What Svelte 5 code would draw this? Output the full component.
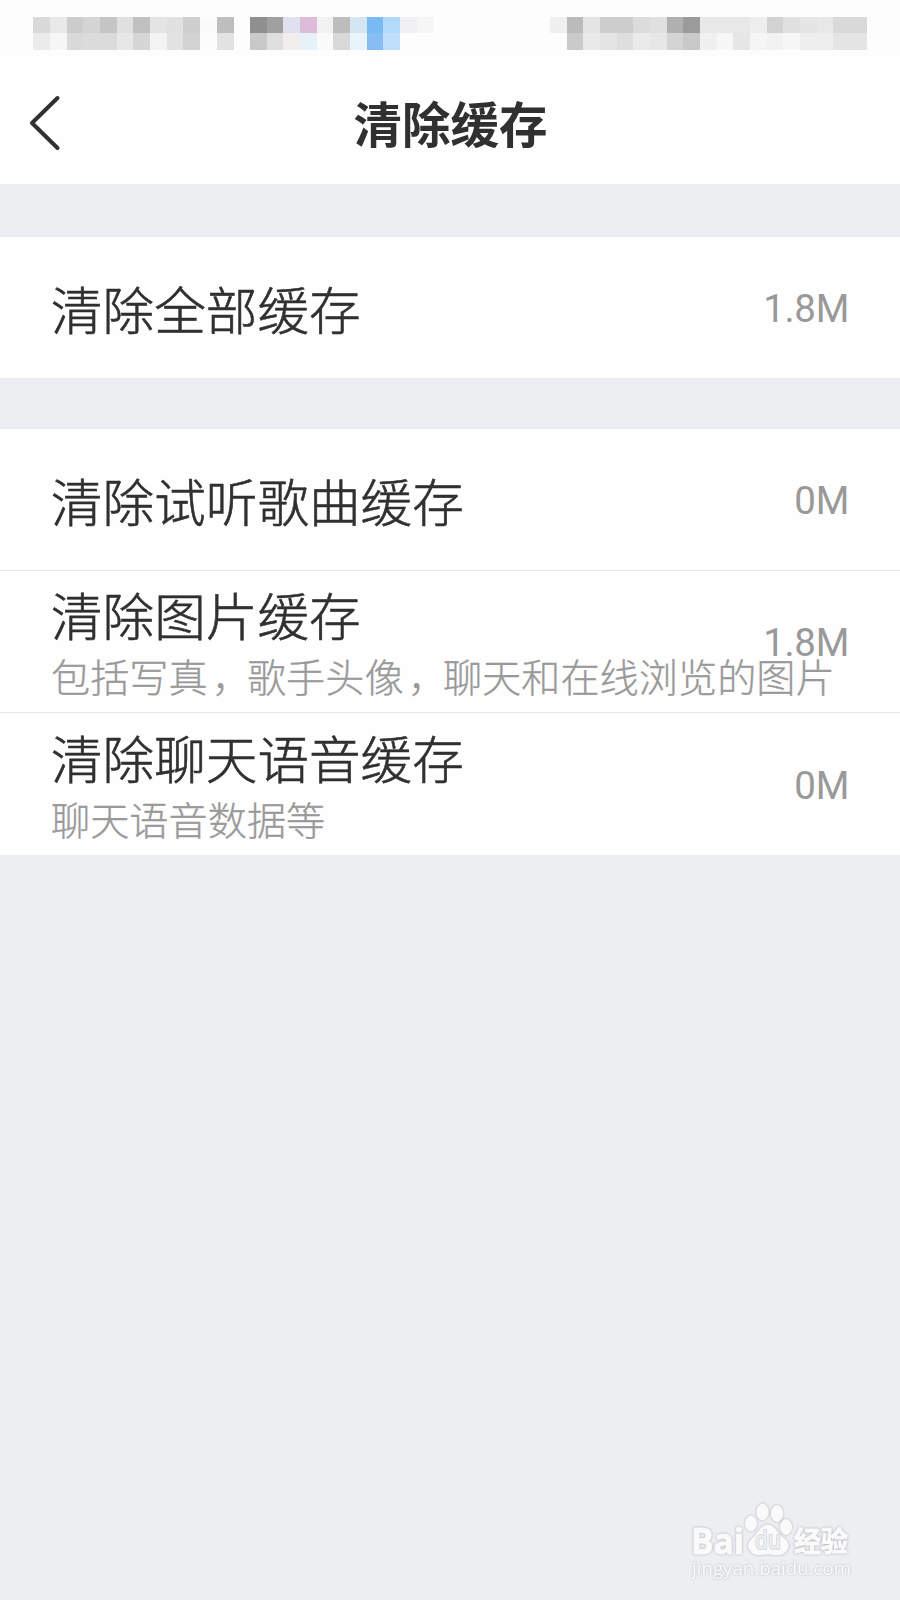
<script>
  // two rows of mosaic tiles, one entry per column, "" leaves the tile empty
  const tiles = [
    "||d9|e9|cc|d4|c5|e0|c0|e4|e1|cf|fa|be||8f|a0|e0e0ee|ddbcd9|f2|bd|d4e6f2|78bbf4|b3daf9|f1f1f3|f6||||||||f0|bb|e4|cd|cd|dc|e0|b0|9b|e8|e8|e8|ee|d2|e1|e5|e8|d9|d9||",
    "||eb|f6|d9|db|db|e7|d6|f3|e2|d3|fc|e2||c9|df|f3eeee|e7f1f8|fa|d9|e8f3fa|86bdf3|bfdffb|||||||||||ca|e9|e4|de|ea|e7|d4|c9|f0|f7|e6|f5|f2|f7|ee|ee|e5|e5||"
  ]
    .map(row => row.split("|"))
    .map(row => row.map(c => (c.length === 2 ? c + c + c : c)));

  const groups = [
    [{ title: "清除全部缓存", size: "1.8M" }],
    [
      { title: "清除试听歌曲缓存", size: "0M" },
      {
        title: "清除图片缓存",
        note: "包括写真，歌手头像，聊天和在线浏览的图片",
        size: "1.8M"
      },
      { title: "清除聊天语音缓存", note: "聊天语音数据等", size: "0M" }
    ]
  ];
</script>

<div class="screen">
  <svg class="status" viewBox="0 0 54 3.36" aria-hidden="true">
    {#each tiles as row, y}
      {#each row as color, x}
        {#if color}
          <rect {x} y={y + 1} width="1.01" height="1" fill={"#" + color} />
        {/if}
      {/each}
    {/each}
  </svg>

  <header>
    <button class="back" aria-label="返回">
      <svg width="36" height="60" viewBox="0 0 36 60">
        <path d="M31.500 5 L6 30 L31.500 55" />
      </svg>
    </button>
    <h1>清除缓存</h1>
  </header>

  <main>
    {#each groups as group}
      <ul>
        {#each group as item}
          <li>
            <div class="label" class:two-line={item.note}>
              <span class="title">{item.title}</span>
              {#if item.note}
                <span class="note">
                  {#each item.note.split(/(，)/) as part}<span class:comma={part === "，"}>{part}</span>{/each}
                </span>
              {/if}
            </div>
            <span class="size">{item.size}</span>
          </li>
        {/each}
      </ul>
    {/each}
  </main>

  <svg class="watermark" width="170" height="90" viewBox="0 0 170 90">
    <g class="mark">
      <text class="latin" x="1" y="53.500" textLength="53" lengthAdjust="spacingAndGlyphs">Bai</text>
      <ellipse cx="61" cy="23.500" rx="5.500" ry="7.500" />
      <ellipse cx="72.500" cy="12" rx="5.700" ry="8" />
      <ellipse cx="87" cy="13.500" rx="5.700" ry="8" />
      <ellipse cx="96" cy="27" rx="5.500" ry="7.500" />
      <path d="M78 25 C71 25 69 32 64 37 C58 42 57 46 60 50 C64 57 71 54 78 54 C85 54 93 57 97 50 C100 45 97 40 92 37 C86 32 85 25 78 25 Z" />
      <text class="cjk" x="104" y="51.500" textLength="54" lengthAdjust="spacingAndGlyphs">经验</text>
    </g>
    <text class="du" x="65" y="49" textLength="26" lengthAdjust="spacingAndGlyphs">du</text>
    <text class="url" x="2" y="75" textLength="159" lengthAdjust="spacingAndGlyphs">jingyan.baidu.com</text>
  </svg>
</div>

<style>
  :global(body) {
    margin: 0;
    background: #eceef2;
  }

  .screen {
    position: relative;
    width: 900px;
    height: 1600px;
    overflow: hidden;
    background: #eceef2;
    font-family: Roboto, "Noto Sans CJK SC", sans-serif;
    color: #303030;
  }

  .status {
    display: block;
    width: 900px;
    height: 56px;
    background: #fdfdfd;
    shape-rendering: crispEdges;
  }

  header {
    display: grid;
    grid-template-columns: 90px 1fr 90px;
    align-items: center;
    box-sizing: border-box;
    height: 128px;
    background: #fefefe;
  }

  .back {
    display: flex;
    padding: 5px 0 0 26px;
    border: 0;
    background: none;
  }

  .back path {
    fill: none;
    stroke: #303030;
    stroke-width: 4;
    stroke-linecap: round;
    stroke-linejoin: round;
  }

  h1 {
    margin: 0;
    padding: 14px 0 0 1px;
    font-size: 48.5px;
    line-height: 64px;
    font-weight: 700;
    text-align: center;
  }

  main {
    display: flex;
    flex-direction: column;
    gap: 47px;
    padding-top: 50.500px;
  }

  ul {
    margin: 0;
    padding: 0;
    list-style: none;
    border-top: 2px solid #ececed;
    border-bottom: 2px solid #ececed;
  }

  li {
    display: flex;
    align-items: center;
    justify-content: space-between;
    box-sizing: border-box;
    height: 141px;
    padding: 0 51px;
    background: #fefefe;
  }

  li + li {
    height: 142.500px;
    border-top: 1.5px solid #e8e8ea;
  }

  .label {
    display: flex;
    flex-direction: column;
    width: 0;
    padding-top: 11px;
    white-space: nowrap;
  }

  .two-line {
    padding-top: 14px;
  }

  .title {
    font-size: 51.6px;
    line-height: 62px;
    font-weight: 300;
    -webkit-text-stroke: 0.6px;
  }

  .note {
    font-size: 39.2px;
    line-height: 58px;
    font-weight: 300;
    color: #999;
    -webkit-text-stroke: 0.3px;
  }

  .comma {
    display: inline-block;
    box-sizing: border-box;
    width: 1em;
    padding-left: 4px;
  }

  .size {
    padding-top: 3px;
    font-size: 38.5px;
    letter-spacing: -0.3px;
    color: #999;
  }

  .watermark {
    position: absolute;
    left: 690px;
    top: 1500px;
    font-family: "Open Sans", "Noto Sans CJK SC", sans-serif;
  }

  .mark {
    fill: #fafafb;
    stroke: #fafafb;
    stroke-width: 1;
    filter: drop-shadow(0 0 1px #a8a9ae);
  }

  .latin {
    font-size: 36px;
    font-weight: 700;
  }

  .du {
    font-size: 25px;
    font-weight: 600;
    fill: #eceef2;
    stroke: #cfd0d5;
    stroke-width: 1.5;
    paint-order: stroke;
  }

  .cjk {
    font-size: 28px;
    font-weight: 700;
  }

  .url {
    font-size: 19px;
    fill: #fafafb;
    filter: drop-shadow(0 0 0.8px #b8b9be);
  }
</style>
